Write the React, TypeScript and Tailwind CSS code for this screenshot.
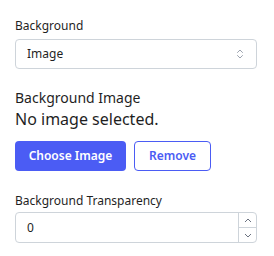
import React from 'react';

const Chevrons: React.FC = () => (
    <svg width="8" height="12" viewBox="0 0 8 12" fill="none" stroke="#9ca3af" strokeWidth="1" strokeLinecap="round" strokeLinejoin="round">
        <path d="M1.5 4.5 L4 2 L6.5 4.5" />
        <path d="M1.5 7.5 L4 10 L6.5 7.5" />
    </svg>
);

const App: React.FC = () => {
    return (
        <div className="w-[274px] h-[256px] bg-white text-[#1f1f1f] pl-[15px] pt-[17px]" style={{ fontFamily: '"Noto Sans", sans-serif' }}>
            <div className="w-[242px] flex flex-col">
                <label className="text-[12px] leading-[18px]">Background</label>
                <div className="mt-[4px] h-[30px] border border-[#ced4da] rounded-[4px] flex items-center justify-between pl-[11px] pr-[12px]">
                    <span className="text-[12px]">Image</span>
                    <Chevrons />
                </div>

                <div className="mt-[19px] text-[14px] leading-[20px]">Background Image</div>
                <div className="text-[16px] leading-[22px]">No image selected.</div>

                <div className="mt-[11px] flex gap-[8px]">
                    <button className="h-[30px] w-[111px] rounded-[4px] bg-[#4b5cf4] text-white text-[12px] font-semibold">
                        Choose Image
                    </button>
                    <button className="h-[30px] w-[77px] rounded-[4px] border border-[#4b5cf4] text-[#4b5cf4] text-[12px] font-semibold">
                        Remove
                    </button>
                </div>

                <label className="mt-[21px] text-[12px] leading-[18px]">Background Transparency</label>
                <div className="mt-[2px] h-[31px] border border-[#ced4da] rounded-[4px] flex items-stretch">
                    <span className="flex-1 flex items-center pl-[11px] text-[12px]">0</span>
                    <div className="w-[18px] border-l border-[#ced4da] flex flex-col">
                        <div className="flex-1 flex items-center justify-center border-b border-[#ced4da]">
                            <svg width="8" height="5" viewBox="0 0 8 5" fill="none" stroke="#6b7280" strokeWidth="1"><path d="M1 4 L4 1 L7 4" /></svg>
                        </div>
                        <div className="flex-1 flex items-center justify-center">
                            <svg width="8" height="5" viewBox="0 0 8 5" fill="none" stroke="#6b7280" strokeWidth="1"><path d="M1 1 L4 4 L7 1" /></svg>
                        </div>
                    </div>
                </div>
            </div>
        </div>
    );
};

export default App;
